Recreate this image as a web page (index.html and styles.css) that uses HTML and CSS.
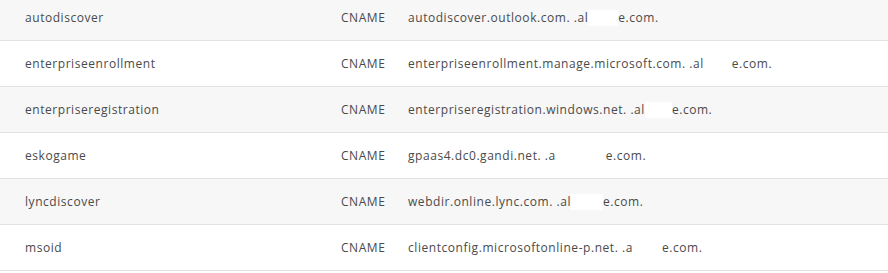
FILE: index.html
```html
<!DOCTYPE html>
<html>
<head>
<meta charset="utf-8">
<link rel="stylesheet" href="styles.css">
</head>
<body>
<div class="records">
  <div class="row odd"><span class="name">autodiscover</span><span class="type">CNAME</span><span class="value">autodiscover.outlook.com. .al<span class="redact" style="width:30px"></span>e.com.</span></div>
  <div class="row"><span class="name">enterpriseenrollment</span><span class="type">CNAME</span><span class="value">enterpriseenrollment.manage.microsoft.com. .al<span class="redact" style="width:28px"></span>e.com.</span></div>
  <div class="row odd"><span class="name">enterpriseregistration</span><span class="type">CNAME</span><span class="value">enterpriseregistration.windows.net. .al<span class="redact" style="width:27px"></span>e.com.</span></div>
  <div class="row"><span class="name">eskogame</span><span class="type">CNAME</span><span class="value">gpaas4.dc0.gandi.net. .a<span class="redact" style="width:50px"></span>e.com.</span></div>
  <div class="row odd"><span class="name">lyncdiscover</span><span class="type">CNAME</span><span class="value">webdir.online.lync.com. .al<span class="redact" style="width:32px"></span>e.com.</span></div>
  <div class="row"><span class="name">msoid</span><span class="type">CNAME</span><span class="value">clientconfig.microsoftonline-p.net. .a<span class="redact" style="width:29px"></span>e.com.</span></div>
</div>
</body>
</html>
```
FILE: styles.css
```css
html, body {
  margin: 0;
  padding: 0;
  background: #ffffff;
}
.records {
  margin-top: -5px;
  font-family: "Open Sans", "DejaVu Sans", sans-serif;
  font-size: 12px;
  letter-spacing: 0.55px;
  color: #4a4a4a;
}
.row {
  display: grid;
  grid-template-columns: 316px 67px 1fr;
  align-items: center;
  height: 45px;
  padding-left: 25px;
  border-bottom: 1px solid #e2e2e2;
  background: #ffffff;
  white-space: nowrap;
}
.row.odd {
  background: #f7f7f7;
}
.redact {
  display: inline-block;
  height: 16px;
  vertical-align: middle;
  background: #ffffff;
}
```
